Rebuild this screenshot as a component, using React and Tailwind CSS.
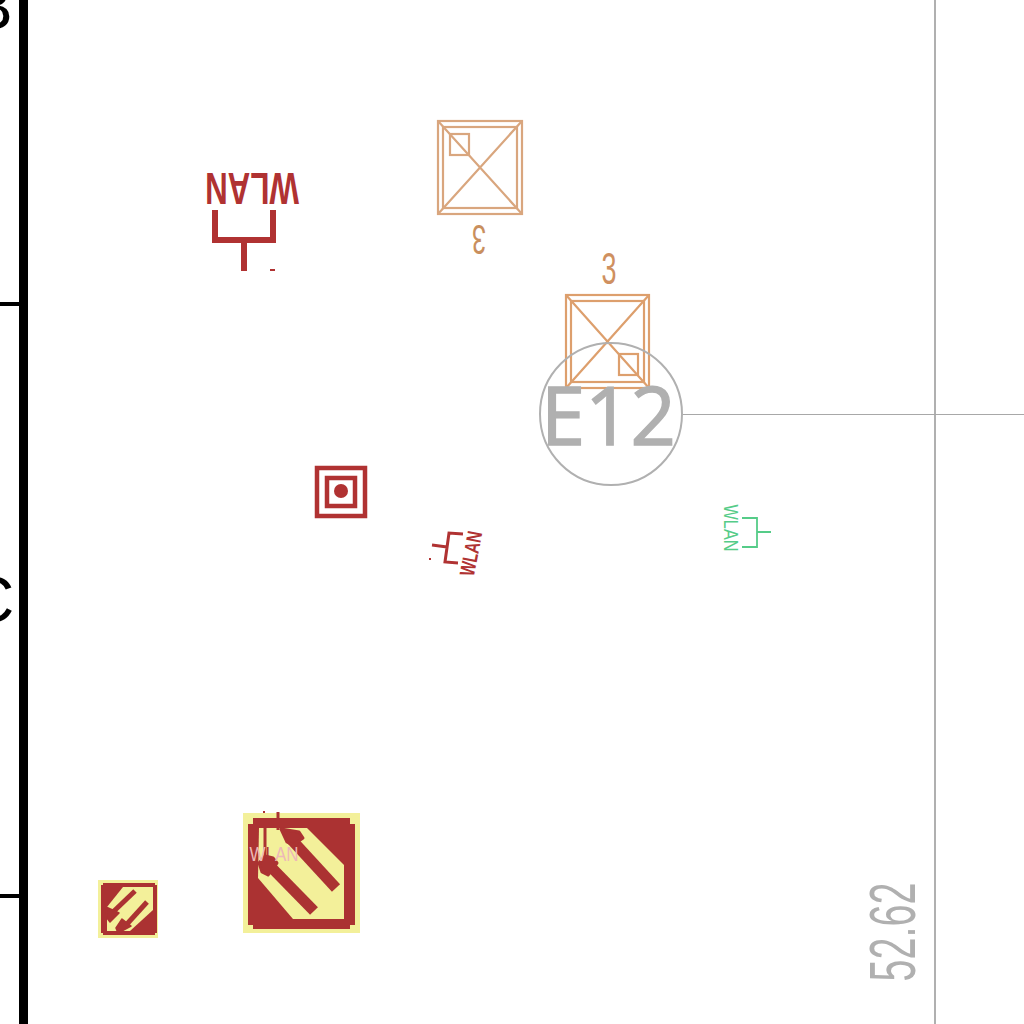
const SANS = "font-['Liberation_Sans',Arial,sans-serif]";

function Label({ x, y, rotate = 0, size, length, className, children }) {
  return (
    <text
      transform={`translate(${x} ${y}) rotate(${rotate})`}
      fontSize={size}
      textAnchor="middle"
      textLength={length}
      lengthAdjust="spacingAndGlyphs"
      className={`${SANS} ${className}`}
    >
      {children}
    </text>
  );
}

function Luminaire({ x, y, w, h, ix, iy, iw, ih, sx, sy, sw, sh, className }) {
  return (
    <g fill="none" strokeWidth="2.2" className={className}>
      <rect x={x} y={y} width={w} height={h} />
      <rect x={ix} y={iy} width={iw} height={ih} />
      <path d={`M${x} ${y}L${x + w} ${y + h}M${x + w} ${y}L${x} ${y + h}`} />
      <rect x={sx} y={sy} width={sw} height={sh} />
    </g>
  );
}

function Frame() {
  return (
    <g>
      <rect x="19" y="0" width="9" height="1024" className="fill-black" />
      <rect x="0" y="302" width="19" height="4" className="fill-black" />
      <rect x="0" y="894" width="19" height="4" className="fill-black" />
      <text x="-30" y="29" fontSize="64" className={`${SANS} fill-black`}>B</text>
      <text x="-32" y="622" fontSize="64" className={`${SANS} fill-black`}>C</text>
      <rect x="934" y="0" width="2" height="1024" className="fill-[#b0b0b0]" />
      <rect x="683" y="414" width="341" height="1" className="fill-[#a8a8a8]" />
      <Label x={915} y={932} rotate={-90} size={65} length={99} className="fill-[#b0b0b0]">52.62</Label>
    </g>
  );
}

function SmallSign() {
  return (
    <g>
      <rect x="98" y="880" width="60" height="58" className="fill-[#f3f09a]" />
      <path d="M103 883H155V885H157V933H155V935H103V933H101V885H103Z" className="fill-[#ab3232]" />
      <path d="M107 907L123 887H153V910L130 931H107Z" className="fill-[#f3f09a]" />
      <g className="stroke-[#ab3232]" strokeWidth="5">
        <path d="M135 891L113 912" />
        <path d="M147 902L127 924" />
      </g>
      <g className="fill-[#ab3232] stroke-[#ab3232]" strokeWidth="1.5" strokeLinejoin="round">
        <path d="M106 907L119 913L110 922L107 918Z" />
        <path d="M122 919L131 926L118 933L116 928Z" />
      </g>
    </g>
  );
}

function BigSign() {
  return (
    <g>
      <rect x="243" y="813" width="117" height="120" className="fill-[#f3f09a]" />
      <path d="M253 818H350V824H355V925H350V929H253V925H248V824H253Z" className="fill-[#ab3232]" />
      <path d="M259 828H307L344 865V919H293L258 878Z" className="fill-[#f3f09a]" />
      <g className="stroke-[#ab3232]" strokeWidth="11">
        <path d="M336 888L290 838" />
        <path d="M314 911L268 864" />
      </g>
      <g className="fill-[#ab3232] stroke-[#ab3232]" strokeWidth="3" strokeLinejoin="round">
        <path d="M281 829L299 832L303 838L293 845L287 842Z" />
        <path d="M265 856L273 858L277 863L268 875L262 872L259 863Z" />
      </g>
      <g className="stroke-[#ab3232]" fill="none" strokeWidth="3">
        <path d="M278 812V830" />
        <path d="M265 822V856" />
      </g>
      <rect x="263" y="811" width="2" height="2" className="fill-[#ab3232]" />
      <Label x={274} y={861} size={20} length={49} className="fill-[#eeb8b8]">
        W<tspan className="fill-[#ab3232]">L</tspan>AN
      </Label>
    </g>
  );
}

export default function App() {
  return (
    <div className="w-[1024px] h-[1024px] bg-white overflow-hidden">
      <svg width="1024" height="1024" viewBox="0 0 1024 1024" className="block">
        <Frame />

        <Luminaire
          x={438} y={121} w={84} h={93}
          ix={443} iy={127} iw={74} ih={81}
          sx={450} sy={134} sw={19} sh={21}
          className="stroke-[#d9a67e]"
        />
        <Label x={479} y={225} rotate={180} size={43} length={14} className="fill-[#c98f5e]">3</Label>

        <Luminaire
          x={566} y={295} w={83} h={93}
          ix={571} iy={301} iw={73} ih={81}
          sx={619} sy={354} sw={19} sh={21}
          className="stroke-[#dd9f6d]"
        />
        <Label x={609} y={284} size={44} length={15} className="fill-[#cf9060]">3</Label>

        <circle cx="611" cy="414" r="71" fill="none" strokeWidth="2" className="stroke-[#b0b0b0]" />
        <text
          x="541"
          y="445"
          fontSize="81"
          textLength="135"
          lengthAdjust="spacingAndGlyphs"
          strokeWidth="1.5"
          className="font-['Open_Sans',sans-serif] fill-[#b0b0b0] stroke-[#b0b0b0]"
        >
          E12
        </text>

        {/* large WLAN outlet, upside down */}
        <Label x={252} y={173} rotate={180} size={44} length={94} className="fill-[#b03232] font-bold">WLAN</Label>
        <path d="M215 210V240H273V210M244 240V271" fill="none" strokeWidth="6" className="stroke-[#b03232]" />
        <rect x="270" y="269" width="5" height="2" className="fill-[#b03232]" />

        {/* target */}
        <g fill="none" strokeWidth="4.5" className="stroke-[#b03232]">
          <rect x="317" y="468" width="48" height="48" />
          <rect x="327" y="478" width="28" height="28" />
        </g>
        <circle cx="341" cy="491" r="7" className="fill-[#b03232]" />

        {/* small tilted WLAN */}
        <path d="M463 534L449 533L445 562L458 563M432 545L447 547" fill="none" strokeWidth="3" className="stroke-[#b03232]" />
        <rect x="429" y="558" width="2" height="2" className="fill-[#b03232]" />
        <Label x={478} y={555} rotate={-79} size={21} length={45} className="fill-[#b03232] font-bold">WLAN</Label>

        {/* green WLAN */}
        <Label x={724} y={528} rotate={90} size={20} length={47} className="fill-[#55cc88]">WLAN</Label>
        <path d="M742 518H757V547H742M757 532H771" fill="none" strokeWidth="1.8" className="stroke-[#55cc88]" />

        <SmallSign />
        <BigSign />
      </svg>
    </div>
  );
}
